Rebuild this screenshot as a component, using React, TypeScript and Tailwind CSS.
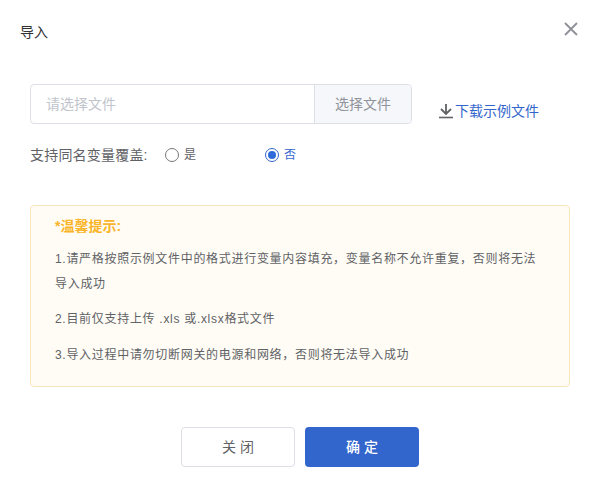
// Import dialog
const font = '"Liberation Sans", "Noto Sans CJK SC", sans-serif';

const tips = [
	"1.请严格按照示例文件中的格式进行变量内容填充\uFF0C变量名称不允许重复\uFF0C否则将无法导入成功",
	"2.目前仅支持上传 .xls 或.xlsx格式文件",
	"3.导入过程中请勿切断网关的电源和网络\uFF0C否则将无法导入成功",
];

function Radio({ label, checked }: { label: string; checked?: boolean }) {
	return (
		<div className="flex items-center gap-[5px]">
			<span
				className={`flex size-[14px] items-center justify-center rounded-full border bg-white ${checked ? "border-[#3366cc]" : "border-[#77787c]"}`}
			>
				{checked && <span className="size-[8px] rounded-full bg-[#2f6bd8]" />}
			</span>
			<span className={`text-xs ${checked ? "text-[#3366cc]" : "text-[#606266]"}`}>{label}</span>
		</div>
	);
}

export default function App() {
	return (
		<div className="flex h-[487px] w-[600px] flex-col bg-white" style={{ fontFamily: font }}>
			<div className="flex items-center justify-between pt-[19px] pr-[22px] pl-5">
				<h2 className="pt-[3px] text-sm leading-[20px] text-[#303133]">导入</h2>
				<svg width="14" height="14" viewBox="0 0 14 14" className="mb-[3px]">
					<path d="M1 1 L13 13 M13 1 L1 13" stroke="#8d9096" strokeWidth="1.8" />
				</svg>
			</div>

			<div className="mt-[42px] flex items-start pl-[30px]">
				<div className="flex h-10 w-[382px] overflow-hidden rounded border border-[#dcdfe6] text-sm">
					<div className="flex flex-1 items-center pl-[15px] text-[#c0c4cc]">请选择文件</div>
					<div className="flex w-[97px] items-center justify-center border-l border-[#dcdfe6] bg-[#f5f7fa] text-[#909399]">
						选择文件
					</div>
				</div>
				<div className="mt-[18px] ml-[26px] flex items-center">
					<svg width="16" height="16" viewBox="0 0 16 16">
						<path d="M8 1 V10.5 M3 6 L8 11 L13 6" stroke="#606266" strokeWidth="1.8" fill="none" />
						<path d="M1 14.5 H15" stroke="#606266" strokeWidth="1.6" />
					</svg>
					<a className="ml-px text-sm leading-[18px] text-[#3366cc]">下载示例文件</a>
				</div>
			</div>

			<div className="mt-[22px] flex h-[18px] items-center pl-[30px]">
				<span className="w-[135px] text-sm tracking-[0.2px] text-[#606266]">支持同名变量覆盖:</span>
				<div className="w-[100px]">
					<Radio label="是" />
				</div>
				<Radio label="否" checked />
			</div>

			<div className="mx-[30px] mt-[41px] h-[182px] rounded border border-[#fae6bd] bg-[#fffcf5] pt-[10px] pl-[24px] text-xs leading-[25px] tracking-[0.7px] text-[#606266]">
				<p className="text-sm leading-[20px] font-bold tracking-normal text-[#f9b428]">*温馨提示:</p>
				<p className="mt-[11px] w-[490px]">{tips[0]}</p>
				<p className="mt-[10px]">{tips[1]}</p>
				<p className="mt-[11px]">{tips[2]}</p>
			</div>

			<div className="mt-10 flex gap-[10px] pl-[181px]">
				<button className="h-10 w-[114px] rounded border border-[#dcdfe6] bg-white text-sm text-[#606266]">
					关 闭
				</button>
				<button className="h-10 w-[114px] rounded bg-[#3366cc] text-sm font-medium text-white">
					确 定
				</button>
			</div>
		</div>
	);
}
